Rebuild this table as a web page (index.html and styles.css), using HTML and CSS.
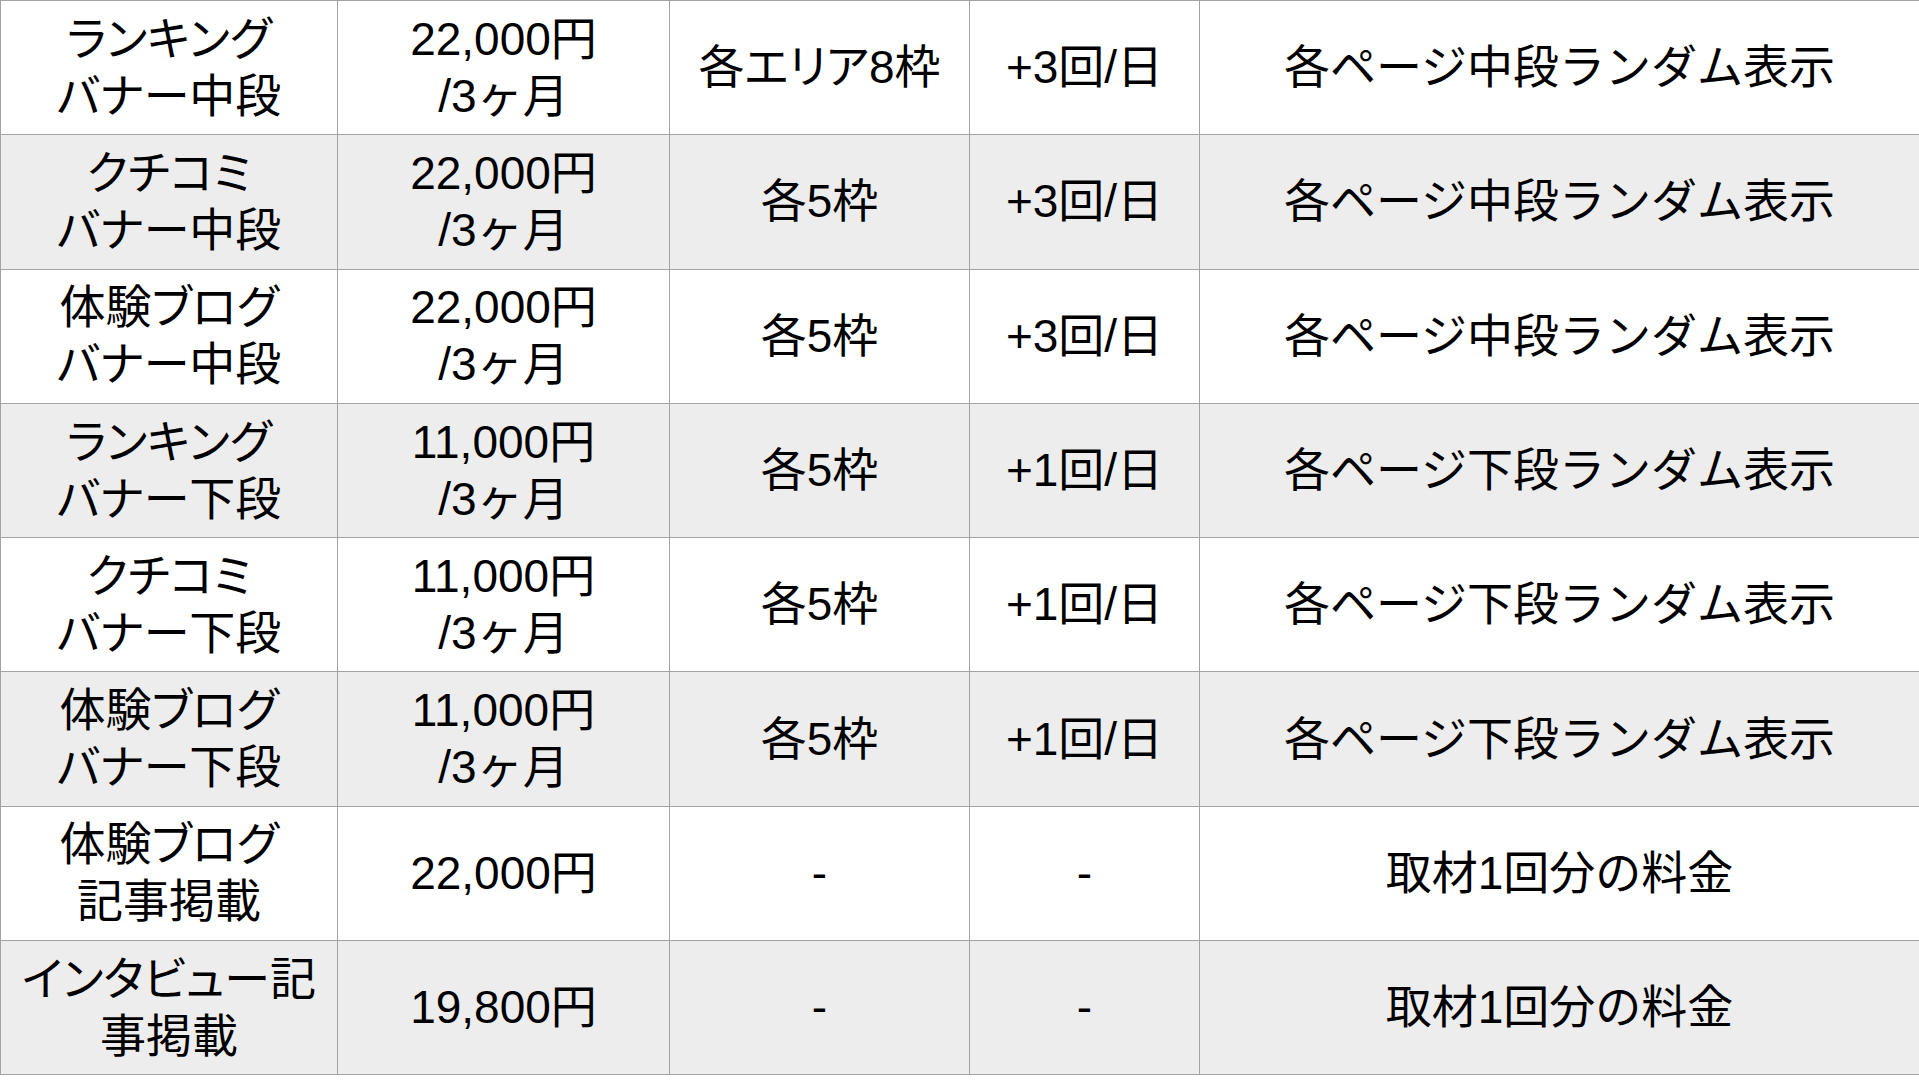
FILE: index.html
```html
<!DOCTYPE html>
<html lang="ja">
<head>
<meta charset="utf-8">
<title>広告掲載料金</title>
<link rel="stylesheet" href="styles.css">
</head>
<body>
<table class="price-table">
  <colgroup>
    <col class="c1"><col class="c2"><col class="c3"><col class="c4"><col class="c5">
  </colgroup>
  <tbody>
    <tr class="odd">
      <td class="name">ランキング<br>バナー中段</td>
      <td>22,000円<br>/3ヶ月</td>
      <td class="slots">各エリア8枠</td>
      <td>+3回/日</td>
      <td>各ページ中段ランダム表示</td>
    </tr>
    <tr class="even">
      <td class="name">クチコミ<br>バナー中段</td>
      <td>22,000円<br>/3ヶ月</td>
      <td class="slots">各5枠</td>
      <td>+3回/日</td>
      <td>各ページ中段ランダム表示</td>
    </tr>
    <tr class="odd">
      <td class="name">体験ブログ<br>バナー中段</td>
      <td>22,000円<br>/3ヶ月</td>
      <td class="slots">各5枠</td>
      <td>+3回/日</td>
      <td>各ページ中段ランダム表示</td>
    </tr>
    <tr class="even">
      <td class="name">ランキング<br>バナー下段</td>
      <td>11,000円<br>/3ヶ月</td>
      <td class="slots">各5枠</td>
      <td>+1回/日</td>
      <td>各ページ下段ランダム表示</td>
    </tr>
    <tr class="odd">
      <td class="name">クチコミ<br>バナー下段</td>
      <td>11,000円<br>/3ヶ月</td>
      <td class="slots">各5枠</td>
      <td>+1回/日</td>
      <td>各ページ下段ランダム表示</td>
    </tr>
    <tr class="even">
      <td class="name">体験ブログ<br>バナー下段</td>
      <td>11,000円<br>/3ヶ月</td>
      <td class="slots">各5枠</td>
      <td>+1回/日</td>
      <td>各ページ下段ランダム表示</td>
    </tr>
    <tr class="odd">
      <td class="name">体験ブログ<br>記事掲載</td>
      <td>22,000円</td>
      <td class="slots">-</td>
      <td>-</td>
      <td>取材1回分の料金</td>
    </tr>
    <tr class="even">
      <td class="name">インタビュー記<br>事掲載</td>
      <td>19,800円</td>
      <td class="slots">-</td>
      <td>-</td>
      <td>取材1回分の料金</td>
    </tr>
  </tbody>
</table>
</body>
</html>
```
FILE: styles.css
```css
html, body {
  margin: 0;
  padding: 0;
  background: #ffffff;
}

body {
  font-family: "Liberation Sans", "Noto Sans CJK JP", sans-serif;
  color: #000000;
}

.price-table {
  width: 1919px;
  table-layout: fixed;
  border-collapse: collapse;
}

.c1 { width: 337px; }
.c2 { width: 332px; }
.c3 { width: 300px; }
.c4 { width: 230px; }
.c5 { width: 720px; }

.price-table td {
  height: 133.3px;
  padding: 0;
  border: 1px solid #a3a3a3;
  text-align: center;
  vertical-align: middle;
  font-size: 46px;
  line-height: 57px;
  white-space: nowrap;
}

.price-table td.name,
.price-table td.slots {
  font-feature-settings: "palt";
}

.price-table tr.odd td {
  background: #ffffff;
}

.price-table tr.even td {
  background: #ededed;
}
```
